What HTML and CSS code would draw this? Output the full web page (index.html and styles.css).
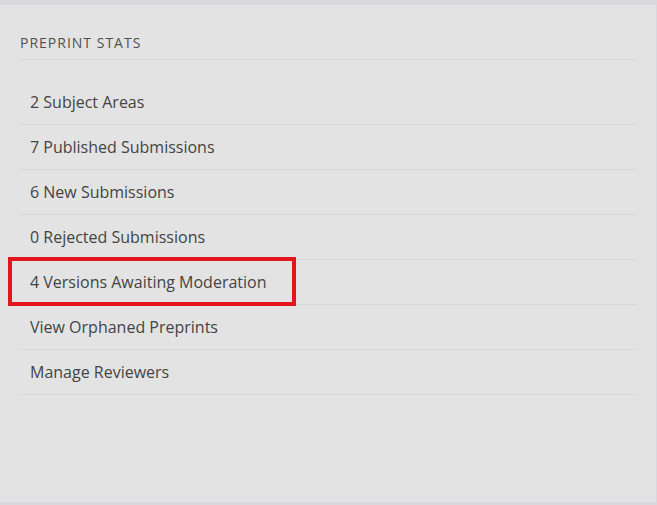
FILE: index.html
```html
<!DOCTYPE html>
<html lang="en">

<head>
    <meta charset="UTF-8">
    <meta name="viewport" content="width=device-width, initial-scale=1.0">
    <title>Preprint Stats</title>
    <link rel="stylesheet" href="styles.css">
</head>

<body>
    <div class="panel">
        <h4 class="panel-title">Preprint Stats</h4>
        <ul class="stats-list">
            <li>2 Subject Areas</li>
            <li>7 Published Submissions</li>
            <li>6 New Submissions</li>
            <li>0 Rejected Submissions</li>
            <li class="highlight">4 Versions Awaiting Moderation<span class="highlight-box"></span></li>
            <li>View Orphaned Preprints</li>
            <li>Manage Reviewers</li>
        </ul>
    </div>
</body>

</html>
```

FILE: styles.css
```css
body {
    font-family: 'Open Sans', 'Noto Sans', sans-serif;
    background-color: #d9d9dd;
    margin: 0;
    padding-top: 5px;
}

.panel {
    background: #e3e3e3;
    width: 656px;
    height: 497px;
    box-sizing: border-box;
    padding: 28px 20px 0 20px;
}

.panel-title {
    margin: 0;
    font-size: 14px;
    font-weight: 500;
    line-height: 20px;
    letter-spacing: 1px;
    text-transform: uppercase;
    color: #505050;
    padding-bottom: 6px;
    border-bottom: 1px solid #d6d6d6;
}

.stats-list {
    list-style: none;
    margin: 20px 0 0 0;
    padding: 0;
}

.stats-list li {
    padding: 10px 10px;
    line-height: 24px;
    font-size: 16px;
    font-weight: 500;
    color: #444;
    border-bottom: 1px solid #d6d6d6;
}

.highlight {
    position: relative;
}

/* red frame drawn over the moderation row */
.highlight-box {
    position: absolute;
    left: -12px;
    top: -3px;
    width: 288px;
    height: 49px;
    box-sizing: border-box;
    border: 4px solid #e3161e;
}
```
